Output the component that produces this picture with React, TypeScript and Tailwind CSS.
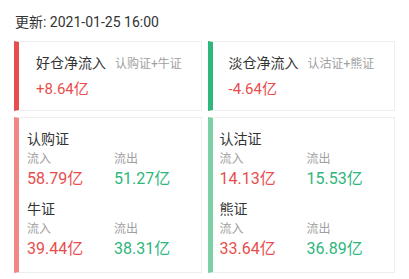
import React from "react";

const font = { fontFamily: 'Roboto, "Noto Sans CJK SC", sans-serif' };

type Flow = { name: string; inflow: string; outflow: string };

const FlowBlock = ({ item, first }: { item: Flow; first?: boolean }) => (
  <div className={first ? "" : "mt-[9px]"}>
    <div className="text-[14px] leading-[20px] text-[#333333]">{item.name}</div>
    <div className="flex text-[12px] leading-[18px] text-[#a0a0a0] mt-px">
      <div className="w-[87px]">流入</div>
      <div>流出</div>
    </div>
    <div className="flex text-[16px] leading-[22px]">
      <div className="w-[87px] text-[#e84d4d]">{item.inflow}</div>
      <div className="text-[#2eb67d]">{item.outflow}</div>
    </div>
  </div>
);

const App = () => {
  return (
    <div className="w-[409px] h-[279px] bg-white overflow-hidden" style={font}>
      <div className="px-[15px] pt-[13px] text-[14px] leading-[18px] text-[#333333]">
        更新: 2021-01-25 16:00
      </div>

      <div className="grid grid-cols-2 gap-[6px] px-[14px] mt-[10px]">
        <div className="h-[70px] border border-[#eeeeee] border-l-[5px] border-l-[#e84d4d] pl-[17px] pt-[11px]">
          <div className="flex items-baseline">
            <span className="text-[14px] leading-[20px] text-[#333333]">好仓净流入</span>
            <span className="ml-[9px] text-[12px] text-[#a0a0a0]">认购证+牛证</span>
          </div>
          <div className="mt-[5px] text-[15px] leading-[22px] text-[#e84d4d]">+8.64亿</div>
        </div>
        <div className="h-[70px] border border-[#eeeeee] border-l-[5px] border-l-[#2eb67d] pl-[16px] pt-[11px]">
          <div className="flex items-baseline">
            <span className="text-[14px] leading-[20px] text-[#333333]">淡仓净流入</span>
            <span className="ml-[9px] text-[12px] text-[#a0a0a0]">认沽证+熊证</span>
          </div>
          <div className="mt-[5px] text-[15px] leading-[22px] text-[#e84d4d]">-4.64亿</div>
        </div>
      </div>

      <div className="grid grid-cols-2 gap-[6px] px-[14px] mt-[6px]">
        <div className="h-[156px] border border-[#eeeeee] border-l-[5px] border-l-[#f08783] pl-[8px] pt-[11px]">
          <FlowBlock first item={{ name: "认购证", inflow: "58.79亿", outflow: "51.27亿" }} />
          <FlowBlock item={{ name: "牛证", inflow: "39.44亿", outflow: "38.31亿" }} />
        </div>
        <div className="h-[156px] border border-[#eeeeee] border-l-[5px] border-l-[#7dcfa6] pl-[7px] pt-[11px]">
          <FlowBlock first item={{ name: "认沽证", inflow: "14.13亿", outflow: "15.53亿" }} />
          <FlowBlock item={{ name: "熊证", inflow: "33.64亿", outflow: "36.89亿" }} />
        </div>
      </div>
    </div>
  );
};

export default App;
